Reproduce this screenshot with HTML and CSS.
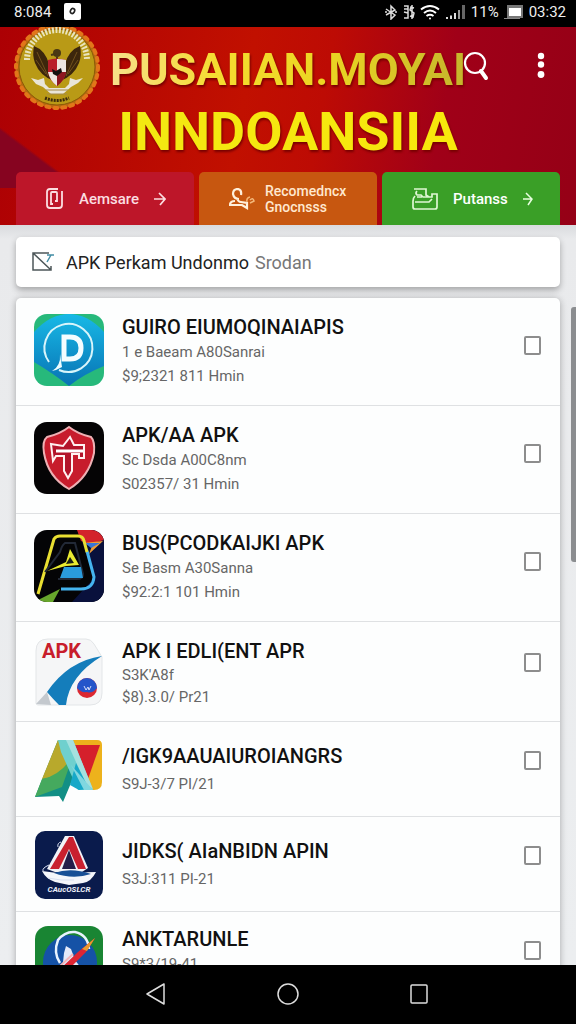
FILE: index.html
```
<!DOCTYPE html>
<html lang="id">
<head>
    <meta charset="UTF-8">
    <meta name="viewport" content="width=device-width, initial-scale=1.0">
    <title>PUSAIIAN.MOYAI INNDOANSIIA</title>
    <link rel="stylesheet" href="styles.css">
</head>
<body>
    <div class="status-bar">
        <span class="status-time">8:084</span>
        <svg class="status-app" width="17" height="17" viewBox="0 0 17 17">
            <rect width="17" height="17" rx="2" fill="#fff"/>
            <ellipse cx="8.500" cy="8" rx="2" ry="2.600" transform="rotate(30 8.500 8)" fill="none" stroke="#222" stroke-width="1.600"/>
        </svg>
        <div class="status-right">
            <svg width="14" height="16" viewBox="0 0 14 16" fill="none" stroke="#ddd" stroke-width="1.500">
                <path d="M2 5l9 6-4 4V2l4 4-9 5M1 8h2M11 8h2"/>
            </svg>
            <svg width="12" height="16" viewBox="0 0 12 16" fill="none" stroke="#ddd" stroke-width="1.500">
                <path d="M1 2h4v12H1M1 5h4M1 8l4 1M11 4L8 3 7 6l4 3-1 4-3-1M9 1v14"/>
            </svg>
            <svg width="20" height="16" viewBox="0 0 20 16" fill="none" stroke="#fff" stroke-width="2">
                <path d="M1 5.500Q10-1.500 19 5.500M4 9Q10 4 16 9M6.500 12Q10 9.500 13.500 12"/>
                <circle cx="10" cy="14.500" r="1" fill="#fff" stroke="none"/>
            </svg>
            <svg width="21" height="16" viewBox="0 0 21 16">
                <path d="M1 13h2v2H1zM5 11.500h2V15H5zM9 9h2v6H9z" fill="#ddd"/>
                <path d="M13 6h2v9h-2z" fill="#999"/>
                <path d="M17 1h3v14h-3z" fill="#666"/>
            </svg>
            <span>11%</span>
            <svg width="20" height="16" viewBox="0 0 20 16">
                <rect x="3" y="1" width="16" height="13" fill="#777"/>
                <rect x="5" y="4" width="12" height="8" fill="#fff"/>
                <path d="M0 14.500h16" stroke="#888"/>
            </svg>
            <span class="status-clock">03:32</span>
        </div>
    </div>

    <header class="header">
        <svg class="emblem" width="88" height="88" viewBox="0 0 88 88">
            <circle cx="44" cy="44" r="41.500" fill="#b56a10"/>
            <circle cx="44" cy="44" r="41" fill="none" stroke="#e2761a" stroke-width="4" stroke-linecap="round" stroke-dasharray="3 5"/>
            <circle cx="44" cy="44" r="38" fill="#b99a16" stroke="#8d5a08"/>
            <path d="M14 37A30 30 0 0 1 74 37" fill="none" stroke="#e9e4bd" stroke-width="6" stroke-dasharray="2 1.500"/>
            <path d="M21 23Q32 27 36 41l5 17Q27 53 22 40q-3-8-1-17zM67 23Q56 27 52 41l-5 17q14-5 19-18 3-8 1-17z" fill="#3c260c"/>
            <path d="M24 29l11 24M23 37l10 14M64 29L53 53M65 37L55 51" stroke="#70501c" fill="none"/>
            <circle cx="44" cy="30" r="4" fill="#4a3813"/>
            <path d="M42 31l-4 1M44 34v4" stroke="#4a3813" stroke-width="2"/>
            <path d="M35 37q9-3 18 0v13q-2 8-9 13-7-5-9-13z" fill="#b91e2a"/>
            <path d="M44 36q5 0 9 1v12h-9zM35 49h9v14q-7-5-9-14z" fill="#eee6e0"/>
            <path d="M44 49h9q-2 9-9 14z" fill="#8d1720"/>
            <path d="M39 46l4 2 5-3 1 4-5 4-4-2z" fill="#151010"/>
            <path d="M18 55l7 2 6-2 1 6 4 4h16l4-4 1-6 6 2 7-2-5 5-7 4-8 7H38l-8-7-7-3z" fill="#e9e5d7"/>
            <path d="M33 67h22M34 71h20" stroke="#a48a4b"/>
            <path d="M32 75q12 5 24 0" stroke="#3c2b0c" stroke-width="3" fill="none" stroke-dasharray="2 1"/>
        </svg>
        <h1 class="title">
            <span class="title-top">PUSAIIAN.MOYAI</span>
            <span class="title-bottom">INNDOANSIIA</span>
        </h1>
        <div class="actions">
            <button class="icon-button" type="button" aria-label="Search">
                <svg width="26" height="30" viewBox="0 0 26 30" fill="none" stroke="#fff" stroke-linecap="round">
                    <circle cx="12" cy="12" r="10" stroke-width="2.200"/>
                    <path d="M18 20l5 7" stroke-width="4"/>
                </svg>
            </button>
            <button class="icon-button" type="button" aria-label="Menu">
                <svg width="8" height="28" viewBox="0 0 8 28" fill="#fff">
                    <circle cx="4" cy="4" r="3.200"/>
                    <circle cx="4" cy="12.500" r="3.200"/>
                    <circle cx="4" cy="22.500" r="3.400"/>
                </svg>
            </button>
        </div>
        <nav class="tabs">
            <button class="tab tab-red" type="button">
                <svg width="18" height="22" viewBox="0 0 18 22" fill="none" stroke="#fbdde0" stroke-width="1.800">
                    <path d="M7 16H5V5q0-1 1-1h4q1 0 1 1v8H9"/>
                    <path d="M12 1H4Q1 1 1 4v13q0 3 3 3h9q3 0 3-3V3"/>
                </svg>
                <span>Aemsare</span>
                <svg class="arrow" width="12" height="16" viewBox="0 0 12 16" fill="none" stroke="#fbdde0" stroke-width="1.700">
                    <path d="M0 8h10M5 2l6 6-5 6"/>
                </svg>
            </button>
            <button class="tab tab-orange" type="button">
                <svg width="26" height="22" viewBox="0 0 26 22" fill="none" stroke="#fff0dc" stroke-width="2.200">
                    <path d="M10 11Q5 11 4 6q0-5 5-5 4 1 3 6M8 10q1 4 4 4l6 1v5l-5-3H1q0-4 5-4"/>
                    <path d="M18 14q-1-4 3-5M21 12q3-3 4 1l-4 2" stroke="#f3b679" stroke-width="1.500"/>
                </svg>
                <span class="tab-small">Recomedncx<br>Gnocnsss</span>
            </button>
            <button class="tab tab-green" type="button">
                <svg width="26" height="24" viewBox="0 0 26 24" fill="none" stroke="#dff7d3" stroke-width="1.700">
                    <path d="M2 2h12v6l3 2h-6l-2-2H5q-2-2 0-4M3 9q-2 2-2 5v6q0 2 2 2h20q2 0 2-2V7h-5v3h-5M3 15h14l3-3M5 10h5"/>
                </svg>
                <span>Putanss</span>
                <svg class="arrow" width="10" height="16" viewBox="0 0 10 16" fill="none" stroke="#e9ffe0" stroke-width="1.500">
                    <path d="M0 8h8M3 2l6 6-4 6"/>
                </svg>
            </button>
        </nav>
    </header>

    <main class="content">
        <form class="search">
            <svg width="24" height="20" viewBox="0 0 24 20" fill="none" stroke="#4d5759" stroke-width="1.500">
                <path d="M17 1H1v17h18v-4M1 1l18 17"/>
                <path d="M15 3h7M19 3l-4 7" stroke="#438da5"/>
            </svg>
            <label for="query">APK Perkam Undonmo</label>
            <input type="text" id="query" name="query" placeholder="Srodan">
        </form>

        <ul class="app-list">
            <li class="app">
                <svg class="app-icon" viewBox="0 0 70 72">
                    <defs>
                        <linearGradient id="blue" x1="0" y1="0" x2="0" y2="1">
                            <stop offset="0" stop-color="#18b9e6"/>
                            <stop offset="1" stop-color="#0873b4"/>
                        </linearGradient>
                        <clipPath id="round"><rect width="70" height="72" rx="13"/></clipPath>
                    </defs>
                    <g clip-path="url(#round)">
                        <rect width="70" height="72" fill="#27b97b"/>
                        <path d="M0 18Q16 0 35 0t35 18v34Q50 60 35 72 20 60 0 48z" fill="url(#blue)"/>
                    </g>
                    <path d="M25 56A24 24 0 1 0 15 48" fill="none" stroke="#d8f5fb" stroke-width="2"/>
                    <path d="M26 40q1 12-8 17 5-1 10-4z" fill="#eefcff"/>
                    <path d="M30 23h6q11 0 11 11t-11 11h-6z" fill="none" stroke="#f4fdff" stroke-width="5"/>
                </svg>
                <div class="app-text">
                    <h2>GUIRO EIUMOQINAIAPIS</h2>
                    <p>1 e Baeam A80Sanrai</p>
                    <p>$9;2321 811 Hmin</p>
                </div>
                <input type="checkbox" aria-label="GUIRO EIUMOQINAIAPIS">
            </li>
            <li class="app">
                <svg class="app-icon" viewBox="0 0 70 72">
                    <rect width="70" height="72" rx="13" fill="#050405"/>
                    <path d="M35 5Q44 12 57 15q4 4 3 16-5 24-25 36Q14 55 10 31 8 19 13 15q13-3 22-10z" fill="#c71c2c" stroke="#eeb0b4" stroke-width="2"/>
                    <path d="M17 22l12 2 7-9 4 8h10v13h-5v-4h-7v17l-4 7-4-7V34h-8l-3 5z" fill="#b3142a" stroke="#fff1f1" stroke-width="2"/>
                    <path d="M22 29h27" stroke="#fff" stroke-width="3"/>
                </svg>
                <div class="app-text">
                    <h2>APK/AA APK</h2>
                    <p>Sc Dsda A00C8nm</p>
                    <p>S02357/ 31 Hmin</p>
                </div>
                <input type="checkbox" aria-label="APK/AA APK">
            </li>
            <li class="app">
                <svg class="app-icon" viewBox="0 0 70 72">
                    <g clip-path="url(#round)">
                        <rect width="70" height="72" fill="#040406"/>
                        <path d="M44 0h26v72H38l22-24z" fill="#09113c"/>
                        <path d="M43 0h27v10l-14 4-9-3z" fill="#d3232b"/>
                        <path d="M49 13l20-2-14 13 3-8z" fill="#ef9b36"/>
                        <path d="M51 13h15l-9 5z" fill="#3976d8"/>
                        <path d="M0 72l26-13-7 13z" fill="#67a62c"/>
                    </g>
                    <path d="M53 21l7 26q-1 12-13 12H27" fill="none" stroke="#45b4ef" stroke-width="3"/>
                    <path d="M4 64L20 9q2-3 6-3h18q5 0 6 5l3 11" fill="none" stroke="#e9df32" stroke-width="3"/>
                    <path d="M11 42l15-20q2-7 5-9h10l8 31q0 5-6 5H24" fill="none" stroke="#222937" stroke-width="2"/>
                    <path d="M30 37h17l2 11H26z" fill="#2a9bdd"/>
                    <path d="M13 41l19-9 4-13 9 16-13 1z" fill="#e9eb31"/>
                    <path d="M32 34l4-7 4 6z" fill="#191f16"/>
                </svg>
                <div class="app-text">
                    <h2>BUS(PCODKAIJKI APK</h2>
                    <p>Se Basm A30Sanna</p>
                    <p>$92:2:1 101 Hmin</p>
                </div>
                <input type="checkbox" aria-label="BUS(PCODKAIJKI APK">
            </li>
            <li class="app app-medium">
                <svg class="app-icon" viewBox="0 0 68 68">
                    <path d="M13 1h38q5 0 8 5l8 13v36q0 12-12 12H3q-2 0-2-2V13Q1 1 13 1z" fill="#f5f6f7" stroke="#e3e6e8"/>
                    <path d="M1 66l11-12 4 13z" fill="#c4c9ce"/>
                    <path d="M67 18Q33 23 12 54q6 7 12 13h7Q34 38 67 18z" fill="#147dbb"/>
                    <circle cx="52" cy="50" r="10" fill="#dc2831"/>
                    <path d="M42 50a10 10 0 0 1 20 0q-5 6-10 4-6 1-10-4z" fill="#2455ca"/>
                    <path d="M49 48l2 4 2-3 1 3 2-4" fill="none" stroke="#d7defa"/>
                    <text x="7" y="20" class="icon-apk">APK</text>
                </svg>
                <div class="app-text">
                    <h2>APK I EDLI(ENT APR</h2>
                    <p>S3K'A8f</p>
                    <p>$8).3.0/ Pr21</p>
                </div>
                <input type="checkbox" aria-label="APK I EDLI(ENT APR">
            </li>
            <li class="app app-short">
                <svg class="app-icon" viewBox="0 0 68 68">
                    <path d="M23 4h39q5 0 5 5v37q0 8-8 8h-9L24 7z" fill="#edb21c"/>
                    <path d="M38 9h27l-12 34z" fill="#d5202b"/>
                    <path d="M23 4L0 61l24-1 4 6 16-38z" fill="#128f85"/>
                    <path d="M23 4L7 43q17-1 29-20z" fill="#b8a92c"/>
                    <path d="M7 43Q25 40 38 20L27 51 0 61z" fill="#45a95e"/>
                    <path d="M23 4h15l20 50H43L26 16z" fill="#6fd0ce"/>
                    <path d="M31 4h7l20 49-7-5z" fill="#a5e1df"/>
                    <path d="M41 27l-6 22 9 5 10-1z" fill="#17a8c8"/>
                    <path d="M36 29l13 25h9z" fill="#80d7e0"/>
                </svg>
                <div class="app-text">
                    <h2>/IGK9AAUAIUROIANGRS</h2>
                    <p>S9J-3/7 PI/21</p>
                </div>
                <input type="checkbox" aria-label="/IGK9AAUAIUROIANGRS">
            </li>
            <li class="app app-short">
                <svg class="app-icon" viewBox="0 0 68 68">
                    <rect width="68" height="68" rx="10" fill="#0a1b4c"/>
                    <path d="M30 5h9l14 32-6 4H20l-8-3z" fill="#f2f2f7"/>
                    <path d="M34 6h4l13 32h-8L34 18 24 38h-9z" fill="#c9202f"/>
                    <path d="M34 19l7 19H27z" fill="#231d49"/>
                    <path d="M7 40l15 2 39-1q-5 10-13 11l-14 2-14-3Q11 48 7 40z" fill="#f4f6fb"/>
                    <path d="M19 42q17-6 37 1-18 6-37-1z" fill="#174f96"/>
                    <path d="M14 34q-7 3-6 6M26 11q-4 1-3 5M13 47q13 3 26 2" stroke="#d8dff0" fill="none"/>
                    <text x="34" y="61" class="icon-caption">CAucOSLCR</text>
                </svg>
                <div class="app-text">
                    <h2>JIDKS( AIaNBIDN APIN</h2>
                    <p>S3J:311 PI-21</p>
                </div>
                <input type="checkbox" aria-label="JIDKS( AIaNBIDN APIN">
            </li>
            <li class="app app-last">
                <svg class="app-icon" viewBox="0 0 68 68">
                    <rect width="68" height="68" rx="13" fill="#198533"/>
                    <circle cx="35" cy="36" r="27" fill="#1552a6"/>
                    <path d="M25 37Q18 27 23 14q7-9 17-8 13 3 14 17" fill="none" stroke="#e8f3ff" stroke-width="2.500"/>
                    <path d="M29 27l2-7 5 3 4 11 9 12H27z" fill="#e4eafa"/>
                    <path d="M60 12L43 26 22 46h9l20-20z" fill="#dd2533"/>
                    <path d="M60 12L47 23l5 2z" fill="#e99b2f"/>
                    <path d="M24 41l14-13" stroke="#f2b5b9" stroke-width="2"/>
                </svg>
                <div class="app-text">
                    <h2>ANKTARUNLE</h2>
                    <p>S9*3/19-41</p>
                </div>
                <input type="checkbox" aria-label="ANKTARUNLE">
            </li>
        </ul>
        <div class="scrollbar"></div>
    </main>

    <nav class="nav-bar">
        <button class="icon-button" type="button" aria-label="Back">
            <svg width="24" height="24" viewBox="0 0 24 24" fill="none" stroke="#ddd" stroke-width="1.500">
                <path d="M20 1v20L3 11z" stroke-linejoin="round"/>
            </svg>
        </button>
        <button class="icon-button" type="button" aria-label="Home">
            <svg width="24" height="24" viewBox="0 0 24 24" fill="none" stroke="#ddd" stroke-width="1.500">
                <circle cx="12" cy="11" r="10"/>
            </svg>
        </button>
        <button class="icon-button" type="button" aria-label="Recent apps">
            <svg width="24" height="24" viewBox="0 0 24 24" fill="none" stroke="#ddd" stroke-width="1.500">
                <rect x="3" y="2" width="16" height="18" rx="1"/>
            </svg>
        </button>
    </nav>
</body>
</html>
```
FILE: styles.css
```
* {
    box-sizing: border-box;
}

body {
    display: flex;
    flex-direction: column;
    height: 100vh;
    margin: 0;
    overflow: hidden;
    font-family: Roboto, "Liberation Sans", sans-serif;
    background-color: #000;
}

h1, h2, p, ul {
    margin: 0;
    padding: 0;
}

button {
    padding: 0;
    border: none;
    background: none;
    font-family: inherit;
    color: #fff;
    cursor: pointer;
}

svg {
    display: block;
    flex: none;
}

/* Phone status bar */
.status-bar {
    display: flex;
    align-items: center;
    flex: none;
    height: 27px;
    padding: 0 10px 4px 14px;
    font-size: 15px;
    color: #eee;
    background-color: #000;
}

.status-app {
    margin-left: 13px;
}

.status-right {
    display: flex;
    align-items: center;
    gap: 5px;
    margin-left: auto;
}

/* Red banner */
.header {
    position: relative;
    flex: none;
    padding: 12px 16px 0;
    background: linear-gradient(to bottom left, transparent 49%, #860420 52%) 0 101px / 80px 60px no-repeat,
        linear-gradient(100deg, #ac0004 0%, #c11000 42%, #bd0b04 55%, #a00018 75%, #950016 100%);
}

.emblem {
    position: absolute;
    top: -4px;
    left: 13px;
    clip-path: inset(4px 0 0 0);
}

.title {
    display: flex;
    flex-direction: column;
    align-items: center;
    font-weight: 700;
    line-height: 62px;
    filter: drop-shadow(1px 2px 1px #700);
}

.title span {
    color: transparent;
    background-clip: text;
    -webkit-background-clip: text;
}

.title-top {
    font-size: 45px;
    background-image: linear-gradient(90deg, #f7e08c, #f5dc30 30%, #ecd522 60%, #c5b52c);
}

.title-bottom {
    font-size: 54px;
    background-image: linear-gradient(90deg, #f3e812, #f8e80c);
}

.actions {
    position: absolute;
    top: 24px;
    right: 31px;
    display: flex;
    gap: 48px;
}

.tabs {
    display: grid;
    grid-template-columns: repeat(3, minmax(0, 1fr));
    gap: 5px;
    margin-top: 9px;
}

.tab {
    display: flex;
    align-items: center;
    height: 53px;
    gap: 15px;
    padding-left: 30px;
    border-radius: 5px 5px 0 0;
    font-size: 15px;
    font-weight: 500;
}

.tab-red {
    color: #fbdde0;
    background-color: #bd1629;
}

.tab-orange {
    gap: 10px;
    color: #ffe8cf;
    background-color: #c75710;
}

.tab-green {
    background-color: #3a9f27;
}

.tab-small {
    font-size: 14px;
    line-height: 16px;
    text-align: left;
}

/* Search and app list */
.content {
    position: relative;
    flex: 1;
    min-height: 0;
    padding: 12px 16px 0;
    overflow: hidden;
    background: linear-gradient(#d9dbde, #e9eaec 14px, #eceef0);
}

.search {
    display: flex;
    align-items: center;
    height: 50px;
    padding: 0 16px;
    border-radius: 5px;
    background-color: #fff;
    box-shadow: 0 3px 6px rgba(0, 0, 0, 0.3);
    font-size: 18px;
}

.search label {
    margin: 0 6px 0 10px;
    color: #222;
}

.search input {
    flex: 1;
    min-width: 0;
    padding: 0;
    border: none;
    outline: none;
    font: inherit;
    background: none;
}

.search input::placeholder {
    color: #777;
}

.app-list {
    margin-top: 11px;
    border-radius: 5px;
    list-style: none;
    background-color: #fdfefe;
    box-shadow: 0 1px 7px rgba(0, 0, 0, 0.3);
}

.app {
    display: flex;
    align-items: flex-start;
    height: 108px;
    padding: 16px 19px 0 18px;
    border-bottom: 1px solid #dfe1e3;
}

.app-medium {
    height: 100px;
}

.app-short,
.app-last {
    height: 95px;
    padding-top: 14px;
}

.app-icon {
    width: 70px;
    height: 72px;
    margin-right: 18px;
}

.app-medium .app-icon,
.app-short .app-icon,
.app-last .app-icon {
    height: 68px;
}

.app-text {
    flex: 1;
    min-width: 0;
    white-space: nowrap;
}

.app-short .app-text {
    padding-top: 6px;
}

.app h2 {
    font-size: 20px;
    font-weight: 500;
    line-height: 26px;
    color: #111;
}

.app p {
    font-size: 15px;
    font-weight: 400;
    line-height: 24px;
    color: #666;
}

.app-medium p {
    line-height: 22px;
}

.app-short h2,
.app-short p {
    line-height: 28px;
}

.app input {
    appearance: none;
    width: 17px;
    height: 19px;
    margin: 22px 0 0;
    border: 2px solid #8d8d8d;
    border-radius: 2px;
    background-color: #fff;
}

.app-medium input,
.app-short input,
.app-last input {
    margin-top: 15px;
}

.app input:checked {
    background-color: #3a9f27;
}

.icon-apk {
    font-size: 20px;
    font-weight: 700;
    fill: #c81d2c;
}

.icon-caption {
    font-size: 8px;
    font-style: italic;
    font-weight: 700;
    text-anchor: middle;
    fill: #eef1fa;
}

.scrollbar {
    position: absolute;
    top: 82px;
    right: 0;
    width: 5px;
    height: 255px;
    border-radius: 3px 0 0 3px;
    background-color: #8b8d90;
}

/* Phone navigation */
.nav-bar {
    display: flex;
    align-items: center;
    justify-content: center;
    flex: none;
    gap: 108px;
    height: 59px;
    background-color: #000;
}
```
